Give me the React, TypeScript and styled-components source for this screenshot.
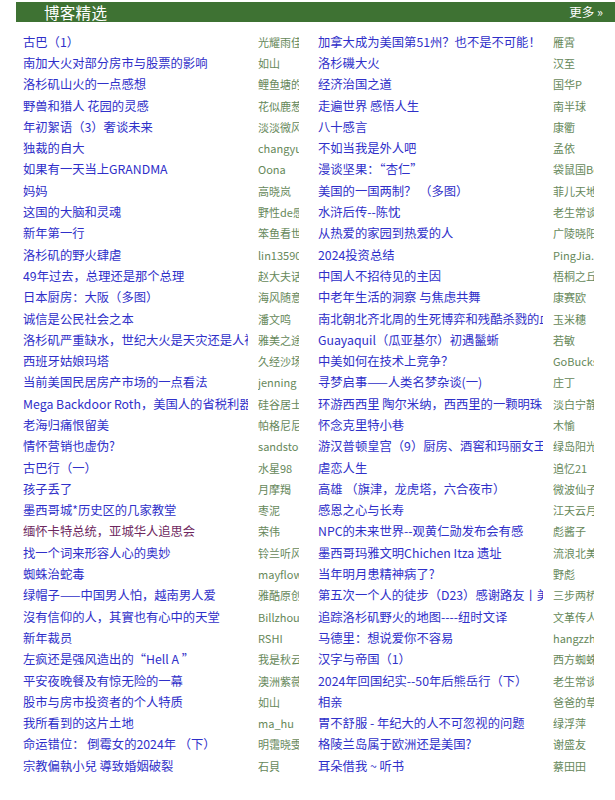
import React from 'react';
import styled, { createGlobalStyle } from 'styled-components';

const GlobalStyle = createGlobalStyle`
  body {
    margin: 0;
    background: #ffffff;
    font-family: "Noto Sans CJK SC", "Noto Sans", sans-serif;
  }
`;

interface Post {
  title: string;
  author: string;
  visited?: boolean;
}

const leftPosts: Post[] = [
  { title: '古巴（1）', author: '光耀雨佳' },
  { title: '南加大火对部分房市与股票的影响', author: '如山' },
  { title: '洛杉矶山火的一点感想', author: '鲤鱼塘的' },
  { title: '野兽和猎人 花园的灵感', author: '花似鹿葱' },
  { title: '年初絮语（3）奢谈未来', author: '淡淡微风' },
  { title: '独裁的自大', author: 'changyuan' },
  { title: '如果有一天当上GRANDMA', author: 'Oona' },
  { title: '妈妈', author: '高晓岚' },
  { title: '这国的大脑和灵魂', author: '野性de感' },
  { title: '新年第一行', author: '笨鱼看世' },
  { title: '洛杉矶的野火肆虐', author: 'lin13590' },
  { title: '49年过去，总理还是那个总理', author: '赵大夫话' },
  { title: '日本厨房：大阪（多图）', author: '海风随意' },
  { title: '诚信是公民社会之本', author: '潘文鸣' },
  { title: '洛杉矶严重缺水，世纪大火是天灾还是人祸', author: '雅美之途' },
  { title: '西班牙姑娘玛塔', author: '久经沙场' },
  { title: '当前美国民居房产市场的一点看法', author: 'jenning' },
  { title: 'Mega Backdoor Roth，美国人的省税利器', author: '硅谷居士' },
  { title: '老海归痛恨留美', author: '帕格尼尼' },
  { title: '情怀营销也虚伪?', author: 'sandstone' },
  { title: '古巴行（一）', author: '水星98' },
  { title: '孩子丢了', author: '月摩羯' },
  { title: '墨西哥城*历史区的几家教堂', author: '枣泥' },
  { title: '缅怀卡特总统，亚城华人追思会', author: '荣伟', visited: true },
  { title: '找一个词来形容人心的奥妙', author: '铃兰听风' },
  { title: '蜘蛛治蛇毒', author: 'mayflower' },
  { title: '绿帽子——中国男人怕，越南男人爱', author: '雅酷原创' },
  { title: '沒有信仰的人，其實也有心中的天堂', author: 'Billzhou' },
  { title: '新年裁员', author: 'RSHI' },
  { title: '左疯还是强风造出的“Hell A ”', author: '我是秋云' },
  { title: '平安夜晚餐及有惊无险的一幕', author: '澳洲紫薇' },
  { title: '股市与房市投资者的个人特质', author: '如山' },
  { title: '我所看到的这片土地', author: 'ma_hu' },
  { title: '命运错位： 倒霉女的2024年 （下）', author: '明霭晓雯' },
  { title: '宗教偏執小兒 導致婚姻破裂', author: '石貝' },
];

const rightPosts: Post[] = [
  { title: '加拿大成为美国第51州？也不是不可能！', author: '雁霄' },
  { title: '洛杉磯大火', author: '汉至' },
  { title: '经济治国之道', author: '国华P' },
  { title: '走遍世界 感悟人生', author: '南半球' },
  { title: '八十感言', author: '康衢' },
  { title: '不如当我是外人吧', author: '孟依' },
  { title: '漫谈坚果：“杏仁”', author: '袋鼠国Bob' },
  { title: '美国的一国两制？ （多图）', author: '菲儿天地' },
  { title: '水浒后传--陈忱', author: '老生常谈' },
  { title: '从热爱的家园到热爱的人', author: '广陵晓阳' },
  { title: '2024投资总结', author: 'PingJia...' },
  { title: '中国人不招待见的主因', author: '梧桐之丘' },
  { title: '中老年生活的洞察 与焦虑共舞', author: '康赛欧' },
  { title: '南北朝北齐北周的生死博弈和残酷杀戮的血腥', author: '玉米穗' },
  { title: 'Guayaquil（瓜亚基尔）初遇鬣蜥', author: '若敏' },
  { title: '中美如何在技术上竞争？', author: 'GoBucks' },
  { title: '寻梦启事——人类名梦杂谈(一)', author: '庄丁' },
  { title: '环游西西里 陶尔米纳，西西里的一颗明珠', author: '淡白宁静' },
  { title: '怀念克里特小巷', author: '木愉' },
  { title: '游汉普顿皇宫（9）厨房、酒窖和玛丽女王的', author: '绿岛阳光' },
  { title: '虐恋人生', author: '追忆21' },
  { title: '高雄 （旗津，龙虎塔，六合夜市）', author: '微波仙子' },
  { title: '感恩之心与长寿', author: '江天云月' },
  { title: 'NPC的未来世界--观黄仁勋发布会有感', author: '彪酱子' },
  { title: '墨西哥玛雅文明Chichen Itza 遗址', author: '流浪北美' },
  { title: '当年明月患精神病了?', author: '野彪' },
  { title: '第五次一个人的徒步（D23）感谢路友丨美', author: '三步两桥' },
  { title: '追踪洛杉矶野火的地图----纽时文译', author: '文革传人' },
  { title: '马德里：想说爱你不容易', author: 'hangzzhai' },
  { title: '汉字与帝国（1）', author: '西方蜘蛛' },
  { title: '2024年回国纪实--50年后熊岳行（下）', author: '老生常谈' },
  { title: '相亲', author: '爸爸的草' },
  { title: '胃不舒服 - 年纪大的人不可忽视的问题', author: '绿浮萍' },
  { title: '格陵兰岛属于欧洲还是美国?', author: '谢盛友' },
  { title: '耳朵借我 ~ 听书', author: '蔡田田' },
];

const Panel = styled.div`
  padding-left: 16px;
`;

const HeaderBar = styled.div`
  display: flex;
  align-items: center;
  justify-content: space-between;
  height: 20px;
  margin-top: 2px;
  background: #3e7233;
  color: #ffffff;
`;

const HeaderTitle = styled.span`
  margin-left: 28px;
  font-size: 15.5px;
  line-height: 20px;
  letter-spacing: 0.3px;
`;

const MoreLink = styled.a`
  margin-right: 12px;
  font-size: 12.5px;
  line-height: 20px;
  color: #ffffff;
  text-decoration: none;
`;

const Columns = styled.div`
  display: grid;
  grid-template-columns: 295px 290px;
  padding: 9px 0 0 7px;
`;

const Column = styled.ul`
  list-style: none;
  margin: 0;
  padding: 0;
`;

const Row = styled.li`
  display: flex;
  align-items: center;
  height: 21.3px;
`;

const Title = styled.a<{ $visited?: boolean }>`
  width: 225px;
  flex: none;
  overflow: hidden;
  white-space: nowrap;
  font-size: 12.3px;
  color: ${(p) => (p.$visited ? '#6e2860' : '#2f2fc9')};
  text-decoration: none;
`;

const Author = styled.span`
  width: 41px;
  flex: none;
  margin-left: 10px;
  overflow: hidden;
  white-space: nowrap;
  font-size: 11px;
  color: #66885a;
`;

const PostList: React.FC<{ posts: Post[] }> = ({ posts }) => (
  <Column>
    {posts.map((p, i) => (
      <Row key={i}>
        <Title href="#" $visited={p.visited}>
          {p.title}
        </Title>
        <Author>{p.author}</Author>
      </Row>
    ))}
  </Column>
);

export default function App() {
  return (
    <>
      <GlobalStyle />
      <Panel>
        <HeaderBar>
          <HeaderTitle>博客精选</HeaderTitle>
          <MoreLink href="#">更多 »</MoreLink>
        </HeaderBar>
        <Columns>
          <PostList posts={leftPosts} />
          <PostList posts={rightPosts} />
        </Columns>
      </Panel>
    </>
  );
}
